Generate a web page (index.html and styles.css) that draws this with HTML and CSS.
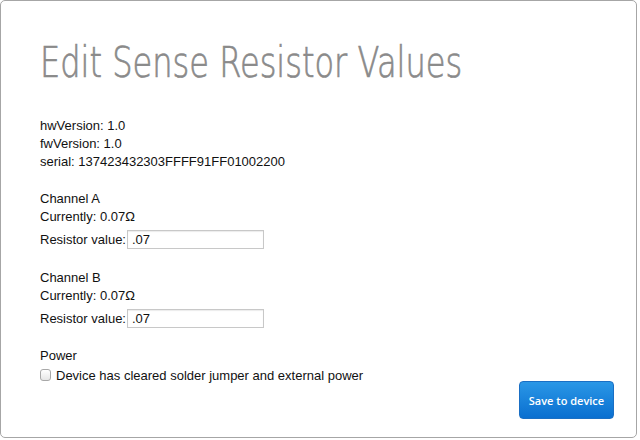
FILE: index.html
```html
<!DOCTYPE html>
<html>
<head>
<meta charset="utf-8">
<link rel="stylesheet" href="styles.css">
</head>
<body>
<div class="window">
  <h1 class="title"><span class="title-text">Edit Sense Resistor Values</span></h1>
  <div class="info">
    <div class="line">hwVersion: 1.0</div>
    <div class="line">fwVersion: 1.0</div>
    <div class="line">serial: 137423432303FFFF91FF01002200</div>
  </div>
  <div class="section">
    <div class="line">Channel A</div>
    <div class="line">Currently: 0.07Ω</div>
    <label class="field">Resistor value: <input class="input" type="text" value=".07"></label>
  </div>
  <div class="section">
    <div class="line">Channel B</div>
    <div class="line">Currently: 0.07Ω</div>
    <label class="field">Resistor value: <input class="input" type="text" value=".07"></label>
  </div>
  <div class="section power">
    <div class="line">Power</div>
    <label class="check"><span class="box"></span>Device has cleared solder jumper and external power</label>
  </div>
  <div class="actions">
    <button class="save">Save to device</button>
  </div>
</div>
</body>
</html>
```
FILE: styles.css
```css
html, body {
  margin: 0;
  padding: 0;
  background: #ffffff;
}
.window {
  box-sizing: border-box;
  width: 637px;
  height: 438px;
  border: 1px solid #a6a6a6;
  border-radius: 5px;
  padding: 0 0 0 39px;
  font-family: "Liberation Sans", Arial, sans-serif;
  font-size: 13px;
  color: #111;
  display: flex;
  flex-direction: column;
}
.title {
  margin: 36px 0 0 0;
  font-family: "DejaVu Sans", sans-serif;
  font-weight: 200;
  font-size: 43px;
  line-height: 50px;
  color: #8a8a8a;
  height: 50px;
  white-space: nowrap;
}
.title-text {
  display: inline-block;
  transform: scaleX(0.745);
  transform-origin: left center;
  -webkit-text-stroke: 0.7px #8a8a8a;
}
.info {
  margin-top: 30px;
}
.line {
  line-height: 18px;
  height: 18px;
}
.section {
  margin-top: 19px;
  display: flex;
  flex-direction: column;
}
.field {
  display: flex;
  align-items: center;
  height: 22px;
  margin-top: 2px;
  gap: 1px;
}
.input {
  box-sizing: border-box;
  width: 137px;
  height: 19px;
  border: 1px solid #c8c8c8;
  box-shadow: inset 0 1px 1px rgba(0,0,0,0.08);
  padding: 0 4px;
  font-family: "Liberation Sans", Arial, sans-serif;
  font-size: 13px;
  color: #111;
  margin: 0;
}
.power {
  margin-top: 18px;
}
.check {
  display: flex;
  align-items: center;
  height: 18px;
  margin-top: 1px;
}
.box {
  box-sizing: border-box;
  width: 11px;
  height: 12px;
  border: 1px solid #a8a8a8;
  border-radius: 3px;
  background: linear-gradient(#ffffff, #e6e6e6);
  margin-right: 5px;
  flex: none;
}
.actions {
  display: flex;
  justify-content: flex-end;
  padding-right: 22px;
  margin-top: -3px;
}
.save {
  width: 95px;
  height: 38px;
  border: 1px solid #1a6fc4;
  border-radius: 4px;
  background: linear-gradient(#2a97e6, #0a6fd0);
  color: #fff;
  font-family: "Open Sans", sans-serif;
  font-weight: 600;
  font-size: 11px;
  padding: 0;
}
```
